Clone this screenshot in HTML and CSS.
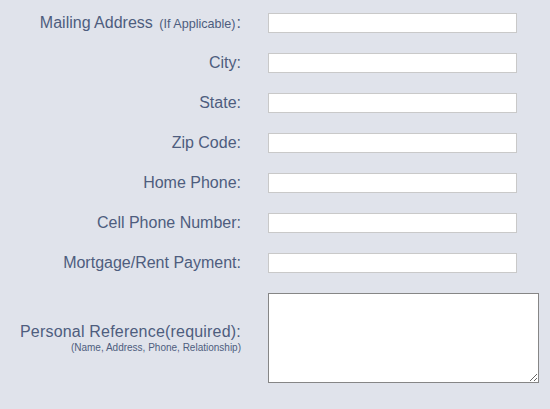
FILE: index.html
```html
<!DOCTYPE html>
<html lang="en">
<head>
    <meta charset="UTF-8">
    <meta name="viewport" content="width=device-width, initial-scale=1.0">
    <title>Application Form</title>
    <link rel="stylesheet" href="styles.css">
</head>
<body>
    <form class="app-form">
        <div class="form-row">
            <label class="field-label" for="mailing">Mailing Address <small>(If Applicable)</small>:</label>
            <input class="field-input" type="text" id="mailing">
        </div>
        <div class="form-row">
            <label class="field-label" for="city">City:</label>
            <input class="field-input" type="text" id="city">
        </div>
        <div class="form-row">
            <label class="field-label" for="state">State:</label>
            <input class="field-input" type="text" id="state">
        </div>
        <div class="form-row">
            <label class="field-label" for="zip">Zip Code:</label>
            <input class="field-input" type="text" id="zip">
        </div>
        <div class="form-row">
            <label class="field-label" for="homePhone">Home Phone:</label>
            <input class="field-input" type="text" id="homePhone">
        </div>
        <div class="form-row">
            <label class="field-label" for="cellPhone">Cell Phone Number:</label>
            <input class="field-input" type="text" id="cellPhone">
        </div>
        <div class="form-row">
            <label class="field-label" for="payment">Mortgage/Rent Payment:</label>
            <input class="field-input" type="text" id="payment">
        </div>
        <div class="form-row form-row-tall">
            <label class="field-label" for="reference">
                <span class="field-main">Personal Reference(required):</span>
                <span class="field-note">(Name, Address, Phone, Relationship)</span>
            </label>
            <textarea class="field-area" id="reference"></textarea>
        </div>
    </form>
</body>
</html>
```

FILE: styles.css
```css
body {
    font-family: "Liberation Sans", Arial, sans-serif;
    margin: 0;
    padding: 0;
    background-color: #e0e3eb;
    color: #4e5d7e;
}
.app-form {
    padding-top: 3px;
}
.form-row {
    display: grid;
    grid-template-columns: 241px 249px;
    column-gap: 27px;
    align-items: center;
    height: 40px;
}
.form-row-tall {
    grid-template-columns: 241px 271px;
    height: 110px;
}
.field-label {
    text-align: right;
    font-size: 16px;
}
.field-label small {
    font-size: 12.6px;
    margin: 0 1px 0 2px;
}
.field-main {
    letter-spacing: 0.2px;
}
.field-note {
    display: block;
    font-size: 10px;
    margin-top: 1px;
}
.field-input {
    box-sizing: border-box;
    width: 249px;
    height: 20px;
    margin: 0;
    padding: 1px 4px;
    border: 1px solid #c9c9c9;
    background: #fff;
}
.field-area {
    box-sizing: border-box;
    width: 271px;
    height: 90px;
    margin: 0;
    padding: 2px;
    border: 1px solid #868686;
    background: #fff;
}
```
